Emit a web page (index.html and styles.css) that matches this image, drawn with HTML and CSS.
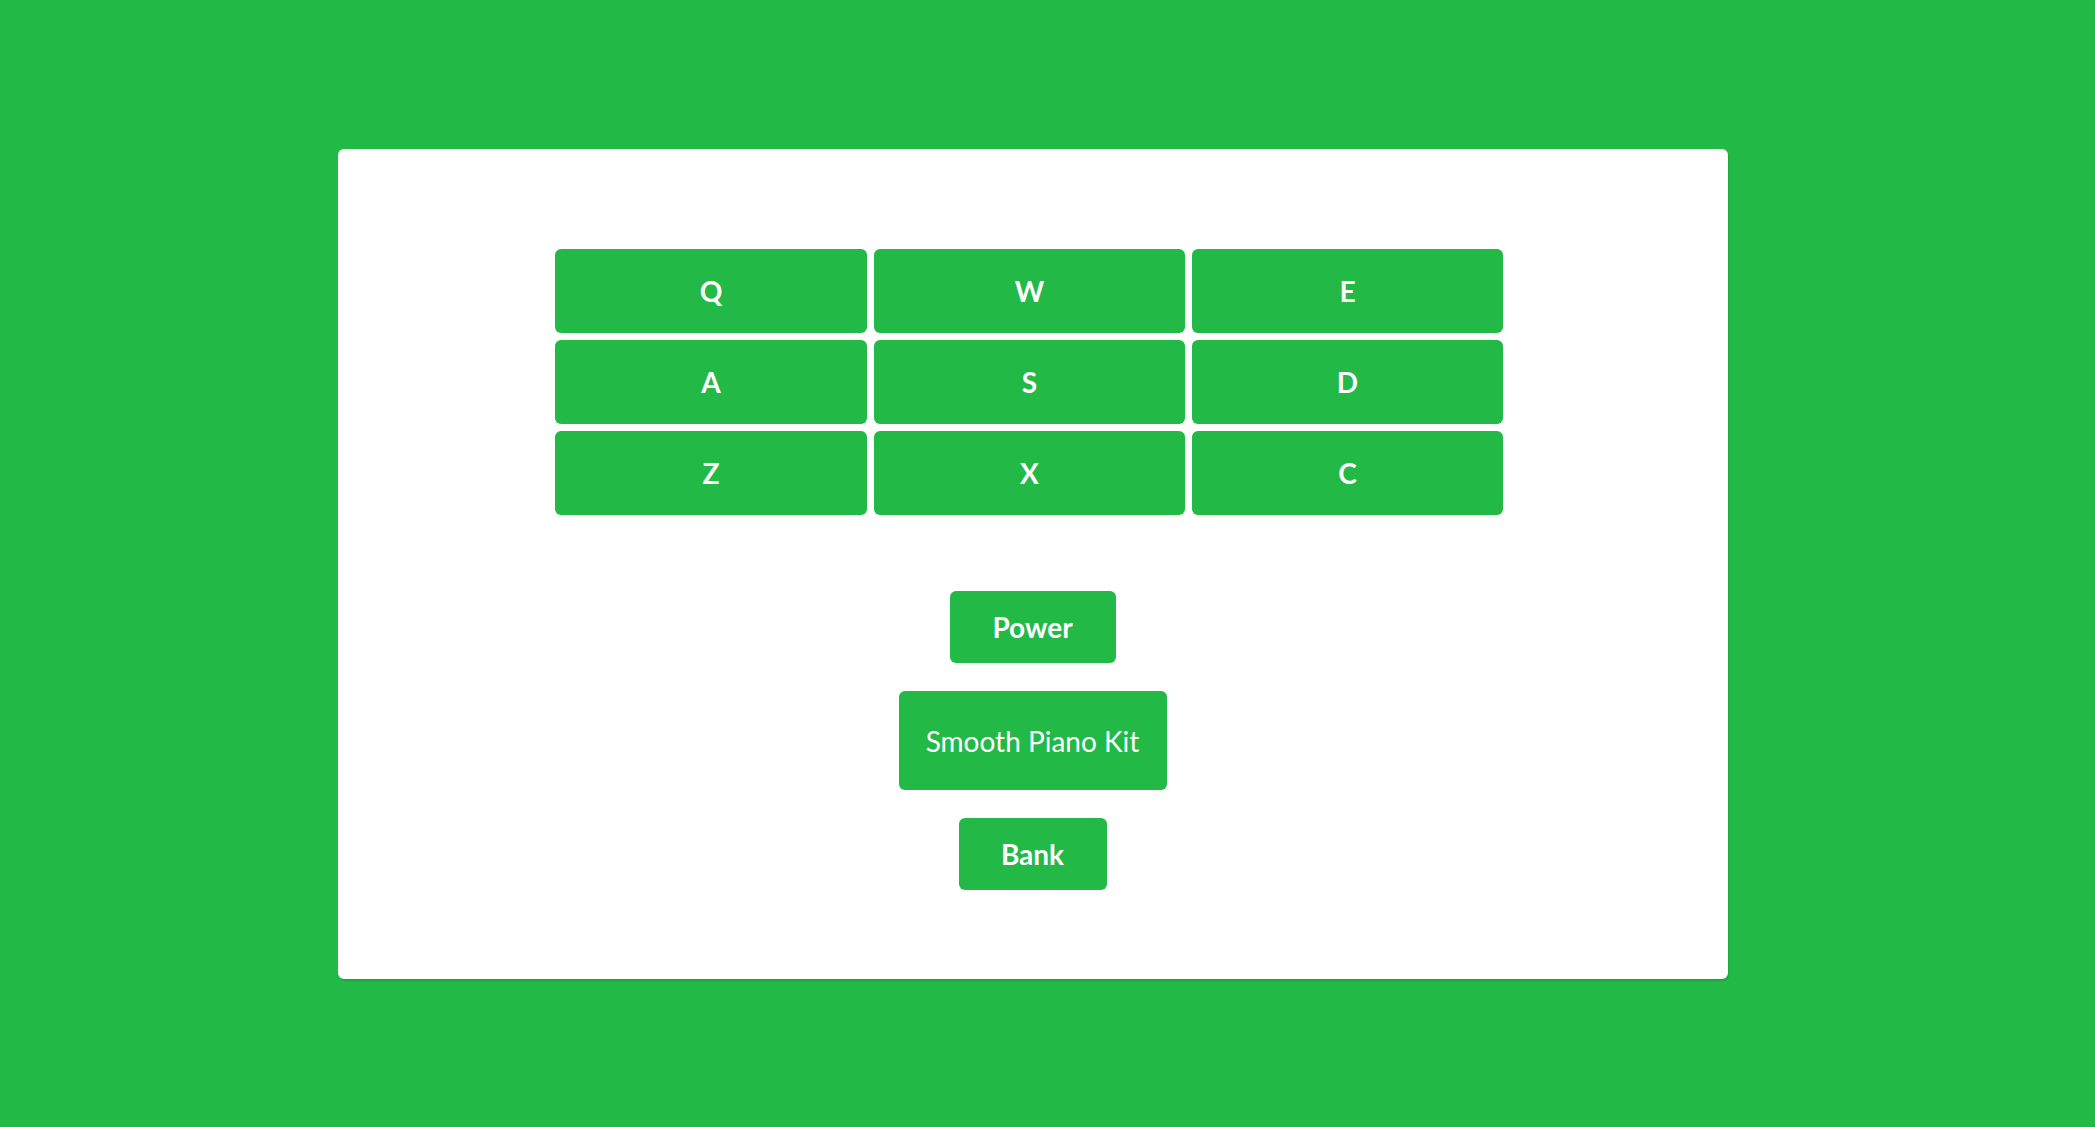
FILE: index.html
```html
<!DOCTYPE html>
<html lang="en">
<head>
<meta charset="utf-8">
<title>Drum Machine</title>
<link rel="stylesheet" href="styles.css">
</head>
<body>
  <main class="machine">
    <div class="pads">
      <button class="pad">Q</button>
      <button class="pad">W</button>
      <button class="pad">E</button>
      <button class="pad">A</button>
      <button class="pad">S</button>
      <button class="pad">D</button>
      <button class="pad">Z</button>
      <button class="pad">X</button>
      <button class="pad">C</button>
    </div>
    <div class="controls">
      <button class="ctrl power">Power</button>
      <div class="display">Smooth Piano Kit</div>
      <button class="ctrl bank">Bank</button>
    </div>
  </main>
</body>
</html>
```

FILE: styles.css
```css
html, body {
  margin: 0;
  padding: 0;
}
body {
  background: #22b947;
  font-family: "Lato", "Noto Sans", sans-serif;
  height: 1127px;
  box-sizing: border-box;
  padding: 149px 0 0 338px;
}
.machine {
  width: 1390px;
  height: 830px;
  box-sizing: border-box;
  background: #ffffff;
  border-radius: 6px;
  box-shadow: 1px 2px 2px rgba(0, 0, 0, 0.12);
  padding: 100px 224px 0 217px;
  display: flex;
  flex-direction: column;
}
.pads {
  display: grid;
  grid-template-columns: 312px 311px 311px;
  grid-template-rows: 84px 84px 84px;
  column-gap: 7px;
  row-gap: 7px;
}
.pad {
  background: #22b947;
  color: #ffffff;
  border: none;
  border-radius: 6px;
  font-family: "Lato", "Noto Sans", sans-serif;
  font-weight: 700;
  font-size: 28px;
  padding: 0;
  margin: 0;
  display: flex;
  align-items: center;
  justify-content: center;
}
.controls {
  margin-top: 76px;
  margin-left: 6px;
  display: flex;
  flex-direction: column;
  align-items: center;
  gap: 28px;
}
.ctrl, .display {
  background: #22b947;
  color: #ffffff;
  border: none;
  border-radius: 6px;
  font-family: "Lato", "Noto Sans", sans-serif;
  font-size: 28px;
  padding: 0;
  margin: 0;
  display: flex;
  align-items: center;
  justify-content: center;
  box-sizing: border-box;
}
.ctrl {
  font-weight: 700;
  height: 72px;
}
.power {
  width: 166px;
}
.bank {
  width: 148px;
}
.display {
  font-weight: 400;
  width: 268px;
  height: 99px;
}
```
